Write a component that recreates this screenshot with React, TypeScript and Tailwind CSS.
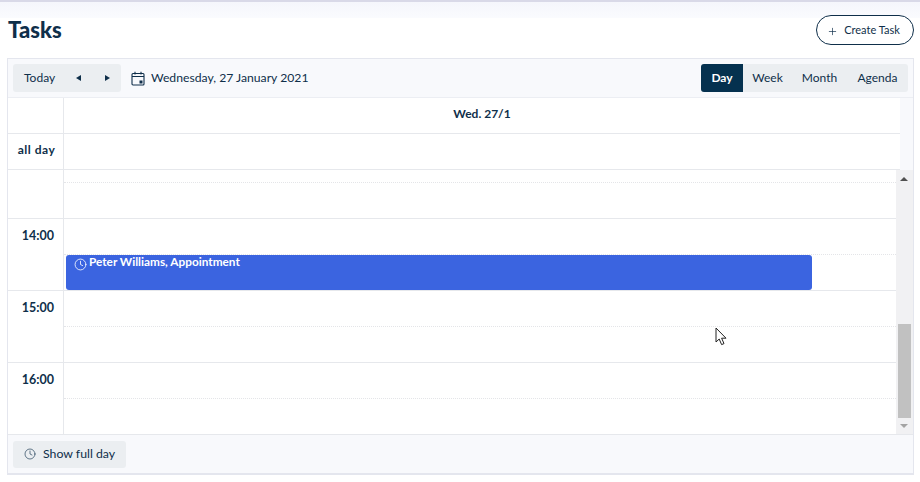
import { Clock, Plus } from "lucide-react";

const font = "font-['Lato','Liberation_Sans',sans-serif]";

// one hour in the scrolling part of the grid
function HourRow({ label, height = "h-[72px]", dotted = "h-9" }: { label?: string; height?: string; dotted?: string }) {
  return (
    <div className={`flex ${height} border-b border-[#e6e8ec]`}>
      <div className="w-[56px] shrink-0 border-r border-[#e6e8ec] pt-[9px] pr-[9px] text-right text-[12.5px] leading-[16px] font-bold text-[#0f2f4a]">
        {label}
      </div>
      <div className="flex-1">
        <div className={`${dotted} border-b border-dotted border-[#e4e5e8]`} />
      </div>
    </div>
  );
}

export default function App() {
  return (
    <div className={`${font} relative h-[482px] w-[920px] overflow-hidden bg-white text-[#0f2f4a]`}>
      <div className="h-[18px] border-t-2 border-[#d9d9e8] bg-gradient-to-b from-[#f5f6fc] to-[#fafbfe]" />

      <div className="-mt-[3px] flex items-start justify-between pr-[6px] pl-2">
        <h1 className="pt-[1px] text-[22px] leading-[28px] font-black text-[#0f2f4a]">Tasks</h1>
        <button className="flex h-[30px] w-[98px] items-center justify-center gap-[6px] rounded-full border border-[#0f2f4a] bg-white pr-[3px] text-[11px]">
          <Plus className="mt-[2px] h-[11px] w-[11px]" strokeWidth={1.5} />
          Create Task
        </button>
      </div>

      <div className="mx-[6px] mt-[13px] ml-[7px] w-[907px] border-x border-t border-b-2 border-[#e4e6ee] bg-[#f8f9fc]">
        {/* toolbar */}
        <div className="flex h-[39px] items-center justify-between border-b border-[#eceef3] pr-[5px] pl-[5px]">
          <div className="flex items-center">
            <div className="flex h-[28px] w-[108px] items-center rounded-[3px] bg-[#ebeef1] text-[12px]">
              <span className="pl-[11px]">Today</span>
              <span className="ml-[21px] h-0 w-0 border-y-[3.5px] border-r-[5px] border-y-transparent border-r-[#0f2f4a]" />
              <span className="ml-[24px] h-0 w-0 border-y-[3.5px] border-l-[5px] border-y-transparent border-l-[#0f2f4a]" />
            </div>
            <svg className="ml-[10px]" width="14" height="15" viewBox="0 0 14 15" fill="none" stroke="#0f2f4a" strokeWidth="1.1">
              <rect x="1" y="2.5" width="12" height="11.5" rx="1" />
              <path d="M1 5.5h12M4 .8v2.6M10 .8v2.6" />
              <rect x="8.5" y="9.5" width="3" height="3" fill="#0f2f4a" stroke="none" />
            </svg>
            <span className="ml-[6px] text-[12.2px]">Wednesday, 27 January 2021</span>
          </div>
          <div className="flex h-[28px] items-center overflow-hidden rounded-[3px] bg-[#ebeef1] text-[12px]">
            <span className="flex h-full w-[42px] items-center justify-center bg-[#05314f] font-bold text-white">Day</span>
            <span className="w-[49px] text-center">Week</span>
            <span className="w-[55px] text-center">Month</span>
            <span className="w-[61px] text-center">Agenda</span>
          </div>
        </div>

        {/* all day header */}
        <div className="w-[892px] bg-white text-[12px] font-bold">
          <div className="flex h-[36px] border-b border-[#e6e8ec]">
            <div className="w-[56px] border-r border-[#e6e8ec]" />
            <div className="flex flex-1 items-center justify-center pb-[3px]">Wed. 27/1</div>
          </div>
          <div className="flex h-[36px] border-b border-[#e6e8ec]">
            <div className="flex w-[56px] items-center justify-center border-r border-[#e6e8ec] pb-[3px] pl-[2px] tracking-[0.5px]">all day</div>
            <div className="flex-1" />
          </div>
        </div>

        {/* scrolling hours */}
        <div className="flex h-[265px] border-b border-[#e6e8ec]">
          <div className="relative flex-1 bg-white">
            <HourRow height="h-[49px]" dotted="h-[13px]" />
            <HourRow label="14:00" />
            <HourRow label="15:00" />
            <HourRow label="16:00" />
            <div className="absolute top-[85px] left-[58px] flex h-[35px] w-[746px] items-start gap-[2px] rounded-[3px] bg-[#3b64e0] pl-[8px] text-[11.8px] leading-[14px] font-bold text-white">
              <Clock className="mt-[3px] h-[13px] w-[13px]" strokeWidth={1.5} />
              Peter Williams, Appointment
            </div>
          </div>
          <div className="flex w-[17px] flex-col items-center bg-[#f1f1f3] pr-[1px]">
            <span className="mt-[7px] h-0 w-0 border-x-[4px] border-b-[4px] border-x-transparent border-b-[#505050]" />
            <div className="mt-[143px] h-[94px] w-[13px] bg-[#c1c1c1]" />
            <span className="mt-[6px] h-0 w-0 border-x-[4px] border-t-[4px] border-x-transparent border-t-[#a3a3a3]" />
          </div>
        </div>

        {/* footer */}
        <div className="flex h-[38px] items-center pl-[5px]">
          <button className="flex h-[27px] w-[113px] items-center gap-[7px] rounded-[3px] bg-[#ebeef1] pl-[11px] text-[12.3px]">
            <Clock className="h-[12px] w-[12px]" strokeWidth={1.25} />
            Show full day
          </button>
        </div>
      </div>

      {/* mouse pointer */}
      <svg className="absolute top-[327px] left-[715px]" width="13" height="20" viewBox="0 0 13 20">
        <path d="M1 1v14l3.2-3 2.4 5.6 2.4-1-2.4-5.4h4.4z" fill="#fff" stroke="#222" strokeWidth="1" />
      </svg>
    </div>
  );
}
